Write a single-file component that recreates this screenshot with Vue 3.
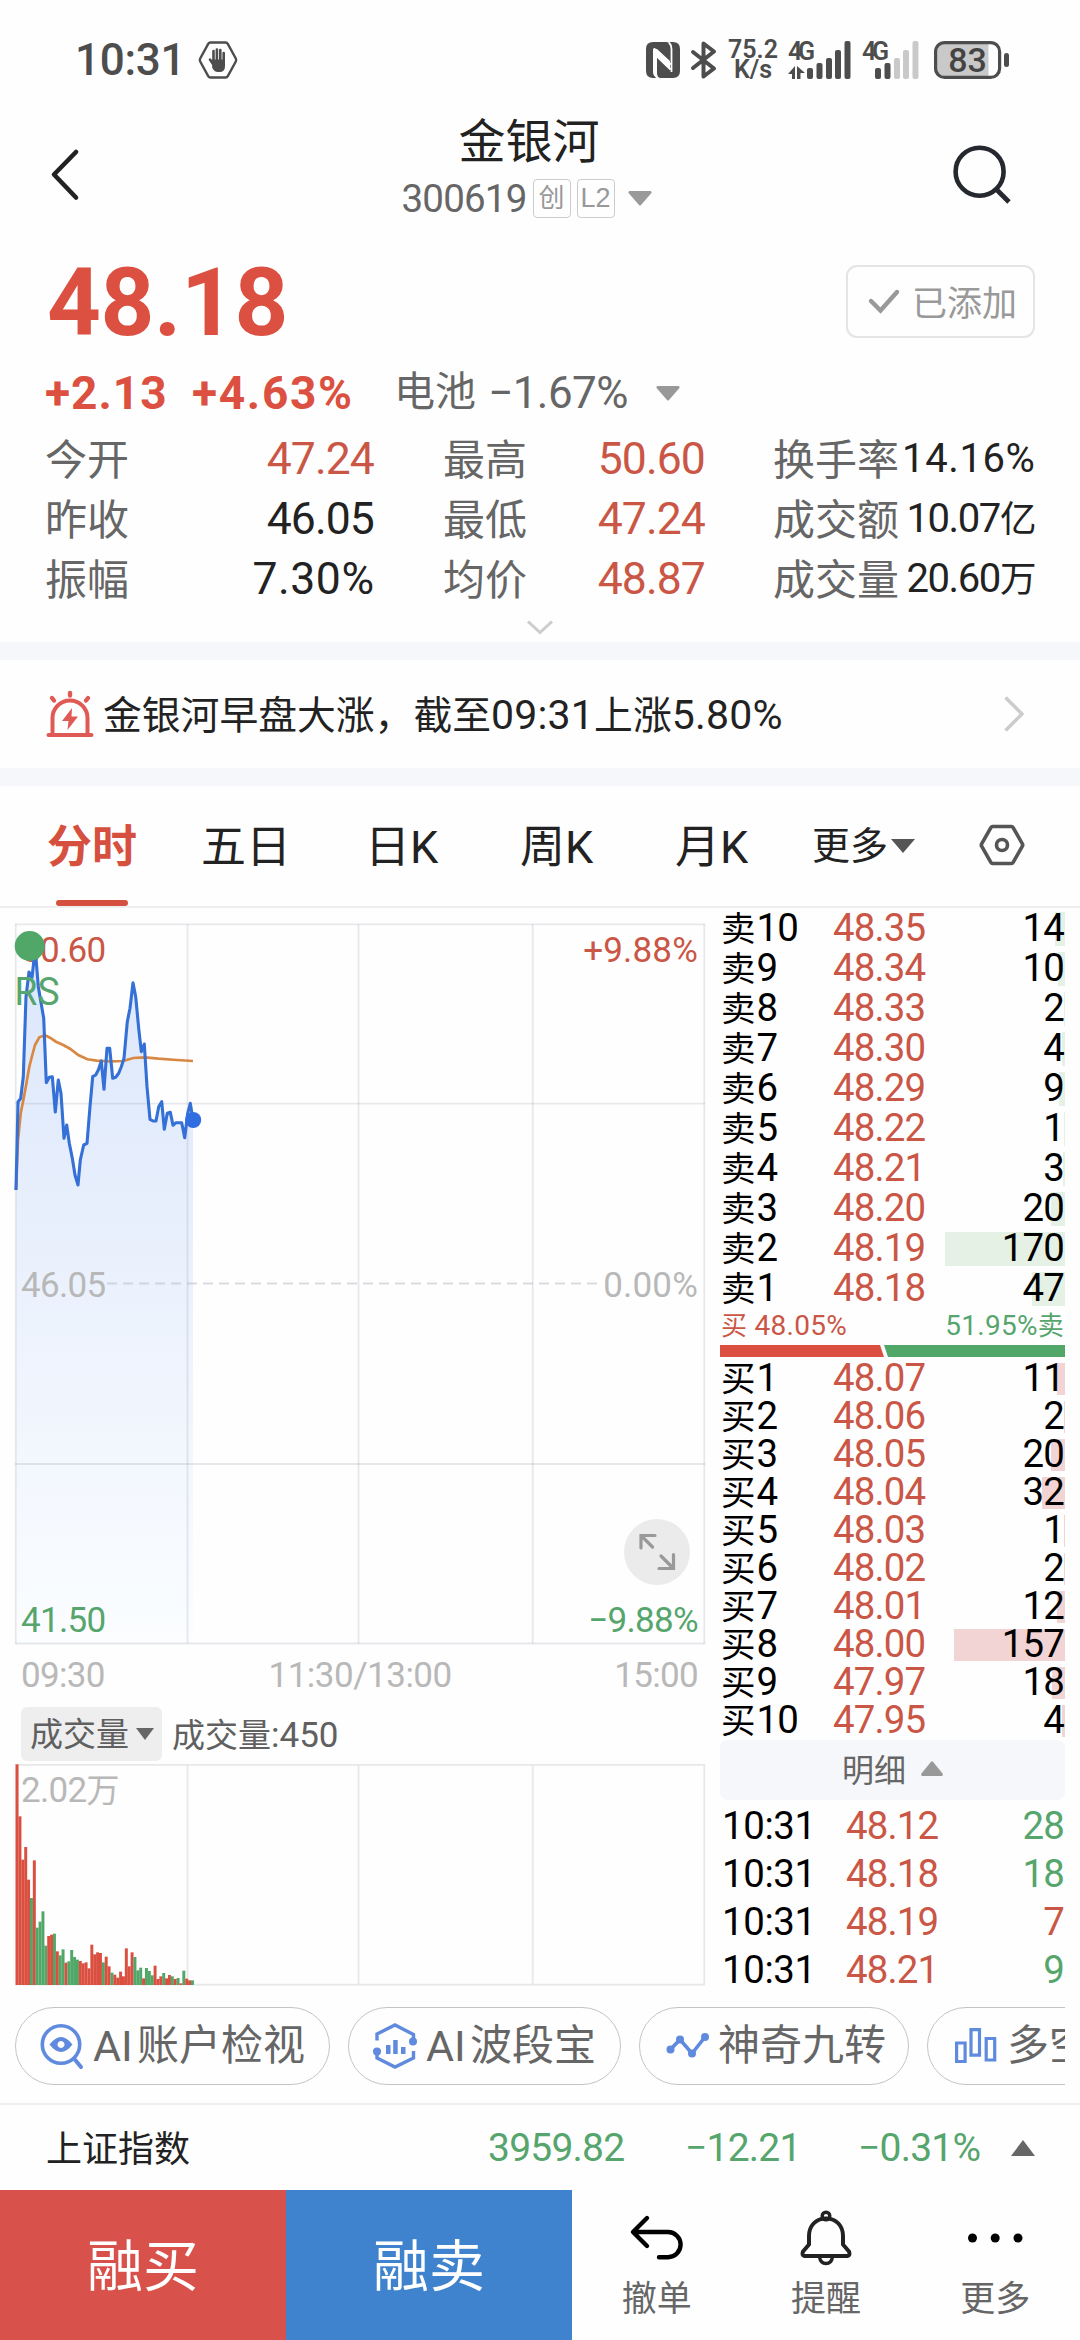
<script setup>
const stats = [
  [['今开', '47.24', 'up'], ['最高', '50.60', 'up'], ['换手率', '14.16%', 'wide']],
  [['昨收', '46.05', ''], ['最低', '47.24', 'up'], ['成交额', '10.07', '', '亿']],
  [['振幅', '7.30%', 'wide'], ['均价', '48.87', 'up'], ['成交量', '20.60', '', '万']],
]

const sells = [
  ['卖10', '48.35', 14], ['卖9', '48.34', 10], ['卖8', '48.33', 2], ['卖7', '48.30', 4], ['卖6', '48.29', 9],
  ['卖5', '48.22', 1], ['卖4', '48.21', 3], ['卖3', '48.20', 20], ['卖2', '48.19', 170], ['卖1', '48.18', 47],
]
const buys = [
  ['买1', '48.07', 11], ['买2', '48.06', 2], ['买3', '48.05', 20], ['买4', '48.04', 32], ['买5', '48.03', 1],
  ['买6', '48.02', 2], ['买7', '48.01', 12], ['买8', '48.00', 157], ['买9', '47.97', 18], ['买10', '47.95', 4],
]
const depth = (n) => ({ width: (n * 120) / 170 + 'px' })

const trades = [
  ['10:31', '48.12', '28', 'down'],
  ['10:31', '48.18', '18', 'down'],
  ['10:31', '48.19', '7', 'up'],
  ['10:31', '48.21', '9', 'down'],
]

// Intraday price and average lines, in thirds of a pixel from the plot origin
const price = [
  [48, 1230], [54, 966], [62, 955], [70, 890], [78, 650], [87, 576], [96, 592], [104, 520], [108, 535], [115, 620],
  [131, 715], [139, 908], [148, 892], [157, 890], [166, 996], [175, 900], [183, 940], [192, 1075], [200, 1035],
  [208, 1090], [217, 1135], [225, 1185], [234, 1215], [241, 1140], [251, 1095], [261, 1090], [270, 980], [278, 890],
  [287, 885], [295, 870], [304, 843], [312, 928], [321, 805], [329, 805], [338, 895], [347, 892], [356, 880],
  [364, 860], [372, 835], [382, 725], [390, 685], [399, 608], [407, 650], [416, 745], [424, 815], [433, 792],
  [441, 920], [450, 1018], [459, 1023], [468, 1023], [476, 980], [485, 965], [493, 1048], [502, 1000], [511, 997],
  [519, 1036], [528, 1028], [545, 1028], [554, 1073], [563, 1000], [571, 970], [579, 1020],
]
const average = [
  [48, 1230], [54, 1080], [62, 1000], [72, 950], [80, 905], [88, 860], [97, 825], [105, 795], [118, 772], [135, 766],
  [150, 773], [168, 785], [190, 795], [210, 806], [235, 825], [262, 838], [290, 842], [330, 844], [370, 843],
  [400, 834], [435, 832], [475, 836], [530, 840], [579, 843],
]
const toPoints = (list) => list.map(([x, y]) => `${(x / 3).toFixed(1)},${(y / 3 - 128).toFixed(1)}`).join(' ')
const pricePoints = toPoints(price)
const averagePoints = toPoints(average)
const areaPoints = `${pricePoints} 193,735 16,735`

const volumes = [
  662, 506, 376, 414, 316, 261, 374, 172, 190, 221, 118, 147, 151, 154, 101, 89, 107, 67, 71, 105, 84, 76, 72, 65, 68, 50,
  121, 92, 98, 96, 68, 85, 56, 37, 31, 22, 40, 26, 110, 56, 98, 84, 44, 52, 20, 51, 42, 29, 58, 18, 26, 36, 20, 30, 26,
  18, 21, 5, 43, 19, 14, 14,
]
const sides = 'rrrrrgrggggrrgrggrggggrrrrrrrrgrrgrrrrrrrgggrgggrrrgrrgrgrgrrg'
const bars = volumes.map((v, i) => ({ x: 15.6 + i * 2.875, h: v / 3, fill: sides[i] === 'r' ? '#da4f3f' : '#50a767' }))

const gridX = [15.7, 187.5, 358.5, 532.7, 704.3]
</script>

<template>
  <div class="app">
    <header class="status">
      <span class="clock">10:31</span>
      <svg class="hex" width="40" height="38" viewBox="0 0 40 38">
        <path d="M12.5 1.5h15q1.5 0 2.3 1.4l8 14.6q.8 1.5 0 3l-8 14.6q-.8 1.4-2.3 1.4h-15q-1.5 0-2.3-1.4l-8-14.6q-.8-1.5 0-3l8-14.6q.8-1.4 2.3-1.4z" fill="none" stroke="#4d4d4d" stroke-width="2.4" />
        <path d="M15.5 20V10M18.900 19V8.500M22.300 19V9M25.700 21V12M12 18.500l4 6" stroke="#4d4d4d" stroke-width="2.600" stroke-linecap="round" />
        <path d="M14.200 18.500h12.800v6.500q0 6-5.500 6h-1.500q-4 0-5.800-4.500z" fill="#4d4d4d" />
      </svg>
      <div class="sys">
        <svg width="34" height="36" viewBox="0 0 34 36">
          <path d="M7 0h13q4 0 4 5v14L11 7 7 7v23q0 4 4 6H7q-7 0-7-7V7q0-7 7-7zM27 36H15q-4 0-4-5V15l13 12V7q0-5-1-7h4q7 0 7 7v22q0 7-7 7z" fill="#4d4d4d" />
          <path d="M8.500 6v23q0 4 2.500 6.500M25.500 30V7q0-4-2.500-6.500M9 7.500l15.500 15M10.500 14l14 13.500" stroke="#fefefe" stroke-width="1.800" fill="none" />
        </svg>
        <svg class="bt" width="26" height="38" viewBox="0 0 26 38">
          <path d="M2 11L23 27.500 12.500 35.500V2.500L23 10.500 2 27" fill="none" stroke="#4d4d4d" stroke-width="4" stroke-linejoin="round" stroke-linecap="round" />
        </svg>
        <div class="rate"><span>75.2</span><span>K/s</span></div>
        <svg class="sig" width="64" height="38" viewBox="0 0 64 38" fill="#4d4d4d">
          <text x="0" y="18.500" class="g4" textLength="27">4G</text>
          <path d="M7 25v13H4v-5H0zM9 25l8 7h-4.500v6H9z" />
          <rect x="19" y="27" width="6" height="11" rx="2" /><rect x="28.500" y="22" width="6" height="16" rx="2" />
          <rect x="38" y="17" width="6" height="21" rx="2" /><rect x="47" y="9" width="6" height="29" rx="2" />
          <rect x="56.500" y="0" width="6" height="38" rx="2" />
        </svg>
        <svg class="sig2" width="58" height="38" viewBox="0 0 58 38" fill="#4d4d4d">
          <text x="0" y="18.500" class="g4" textLength="27">4G</text>
          <rect x="13" y="27" width="6" height="11" rx="2" /><rect x="22.500" y="22" width="6" height="16" rx="2" />
          <g fill="#c9c9c9"><rect x="32" y="17" width="6" height="21" rx="2" /><rect x="41" y="9" width="6" height="29" rx="2" /><rect x="50.500" y="0" width="6" height="38" rx="2" /></g>
        </svg>
        <svg class="bat" width="76" height="38" viewBox="0 0 76 38">
          <path d="M10 3h44.500v32H10q-7 0-7-7V10q0-7 7-7z" fill="#c9c9c9" />
          <rect x="1.600" y="1.600" width="64" height="34.800" rx="9" fill="none" stroke="#4d4d4d" stroke-width="3.200" />
          <rect x="70" y="12" width="5" height="14" rx="2.500" fill="#4d4d4d" />
          <text x="33.500" y="31" text-anchor="middle" class="bn">83</text>
        </svg>
      </div>
    </header>

    <nav class="top">
      <svg class="back" width="30" height="52" viewBox="0 0 30 52"><path d="M26 3L4 25.500 26 48.500" fill="none" stroke="#222" stroke-width="4.600" stroke-linecap="round" stroke-linejoin="round" /></svg>
      <div class="title">
        <h1>金银河</h1>
        <div class="code"><span class="num">300619</span><b>创</b><b class="l2">L2</b><svg width="24" height="15" viewBox="0 0 24 15"><path d="M1.500 0h21q2 1 .5 2.500L13 14q-1 1-2 0L1 2.500Q-.5 1 1.500 0z" fill="#999" /></svg></div>
      </div>
      <svg class="search" width="62" height="62" viewBox="0 0 62 62"><circle cx="28.600" cy="28.700" r="24" fill="none" stroke="#25282e" stroke-width="4.600" /><path d="M45.500 46.500L58 59" stroke="#25282e" stroke-width="4.800" /></svg>
    </nav>

    <section class="quote">
      <div class="priceline">
        <strong class="num">48.18</strong>
        <button><svg width="32" height="26" viewBox="0 0 32 26"><path d="M3 13l9.500 9.500L29 4" fill="none" stroke="#999" stroke-width="4.400" stroke-linecap="round" /></svg>已添加</button>
      </div>
      <div class="change">
        <b class="num c1">+2.13</b><b class="num c2">+4.63%</b><span class="ind">电池</span><span class="num pct">−1.67%</span>
        <svg width="24" height="15" viewBox="0 0 24 15"><path d="M1.500 0h21q2 1 .5 2.500L13 14q-1 1-2 0L1 2.500Q-.5 1 1.500 0z" fill="#999" /></svg>
      </div>
      <div class="stats">
        <div v-for="(row, i) in stats" :key="i" class="srow">
          <div v-for="(c, j) in row" :key="j" :class="['cell', 'cell' + j]">
            <span class="lab">{{ c[0] }}</span><span :class="['num', 'val', c[2]]">{{ c[1] }}<i v-if="c[3]">{{ c[3] }}</i></span>
          </div>
        </div>
      </div>
      <svg class="more" width="28" height="16" viewBox="0 0 28 16"><path d="M2 1.500l12 11 12-11" fill="none" stroke="#ccc" stroke-width="3" /></svg>
    </section>

    <section class="news">
      <svg width="48" height="46" viewBox="0 0 48 46">
        <g fill="none" stroke="#e05a55" stroke-width="4" stroke-linecap="round"><path d="M6.500 42V27a17.500 17.500 0 0 1 35 0v15M2.500 44h43" /><path d="M24 2v2.500M6 7l2 2.500M42 7l-2 2.500" stroke-width="4.400" /></g>
        <path d="M26 17l-10 13h6.500l-1 9L32 25.500h-6.500z" fill="#e05a55" />
      </svg>
      <p>金银河早盘大涨，截至<span class="num">09:31</span>上涨<span class="num">5.80%</span></p>
      <svg class="go" width="22" height="38" viewBox="0 0 22 38"><path d="M2.500 2.500L19 19 2.500 35.500" fill="none" stroke="#ccc" stroke-width="3.400" /></svg>
    </section>

    <nav class="tabs">
      <span class="on">分时</span><span class="five">五日</span><span class="k">日K</span><span class="k">周K</span><span class="k">月K</span>
      <span class="mt">更多<svg width="24" height="14" viewBox="0 0 24 14"><path d="M0 0h24L12 14z" fill="#555" /></svg></span>
      <svg class="gear" width="46" height="42" viewBox="0 0 46 42"><path d="M13.500 2.500h19q1 0 1.500 1l9.500 16.500q.5 1 0 2L34 38.500q-.5 1-1.500 1h-19q-1 0-1.500-1L2.500 22q-.5-1 0-2L12 3.500q.5-1 1.500-1z" fill="none" stroke="#555" stroke-width="3.600" /><circle cx="23" cy="21" r="5.500" fill="none" stroke="#555" stroke-width="3.600" /></svg>
    </nav>

    <main class="main">
      <div class="left">
        <svg class="plot" width="710" height="792" viewBox="0 0 710 792">
          <defs><linearGradient id="area" x1="0" y1="0" x2="0" y2="1"><stop offset="0" stop-color="#dce7fb" /><stop offset="1" stop-color="#fbfdff" /></linearGradient></defs>
          <polygon :points="areaPoints" fill="url(#area)" />
          <g stroke="#8a90a0" stroke-opacity=".2" stroke-width="1.800">
            <path v-for="x in gridX" :key="x" :d="`M${x} 16.300V735.500`" />
            <path d="M15 16.300H705M15 195.700H705M15 556H705M15 735.500H705" />
            <path d="M107 375.500H603" stroke-dasharray="10 6" stroke-opacity=".3" />
          </g>
          <text x="21" y="54" class="t up">50.60</text>
          <polyline :points="averagePoints" fill="none" stroke="#d98843" stroke-width="2.700" />
          <polyline :points="pricePoints" fill="none" stroke="#3570d6" stroke-width="3.100" stroke-linejoin="round" />
          <circle cx="193.200" cy="212" r="8" fill="#2f6de0" />
          <circle cx="29.700" cy="38" r="15" fill="#50a767" />
          <text x="14.500" y="97" class="rs" textLength="45" lengthAdjust="spacingAndGlyphs">RS</text>
          <text x="698" y="54" class="t w up" text-anchor="end">+9.88%</text>
          <text x="21" y="388.500" class="t dim">46.05</text>
          <text x="698" y="388.500" class="t w dim" text-anchor="end">0.00%</text>
          <text x="21" y="724" class="t down">41.50</text>
          <text x="698" y="724" class="t down" text-anchor="end">−9.88%</text>
          <text x="21" y="779" class="t dim">09:30</text>
          <text x="360" y="779" class="t dim" text-anchor="middle" textLength="183">11:30/13:00</text>
          <text x="698" y="779" class="t dim" text-anchor="end">15:00</text>
          <circle cx="657" cy="644" r="33" fill="#ebebeb" />
          <path d="M655 627.500H641V640M641 627.500L652.500 639M659 660.500H673.500V646.500M661 648L673 660" fill="none" stroke="#999" stroke-width="3.200" stroke-linecap="round" />
        </svg>
        <div class="volbar">
          <span class="pick">成交量<svg width="18" height="12" viewBox="0 0 18 12"><path d="M0 0h18L9 12z" fill="#666" /></svg></span>
          <span class="now">成交量<span class="num">:450</span></span>
        </div>
        <svg class="plot" width="710" height="222" viewBox="0 0 710 222">
          <g stroke="#e8e8e8" stroke-width="1.800">
            <path v-for="x in gridX" :key="x" :d="`M${x} 0V220`" />
            <path d="M15 .9H705M15 220.700H705" />
          </g>
          <rect v-for="(b, i) in bars" :key="i" :x="b.x" :y="221 - b.h" width="2.950" :height="b.h" :fill="b.fill" />
          <text x="21" y="38" class="t dim">2.02<tspan font-size="33">万</tspan></text>
        </svg>
      </div>

      <aside class="book">
        <div class="sells">
          <div v-for="r in sells" :key="r[0]" class="lv">
            <span class="n"><i>{{ r[0][0] }}</i>{{ r[0].slice(1) }}</span><span class="p up">{{ r[1] }}</span>
            <span class="q"><em :style="depth(r[2])"></em>{{ r[2] }}</span>
          </div>
        </div>
        <div class="ratio"><span class="up"><i>买</i> 48.05%</span><span class="down">51.95%<i>卖</i></span></div>
        <svg class="split" width="345" height="12" viewBox="0 0 345 12"><path d="M0 0h160l4 12H0z" fill="#da4f3f" /><path d="M164 0h181v12H168z" fill="#50a767" /></svg>
        <div class="buys">
          <div v-for="r in buys" :key="r[0]" class="lv">
            <span class="n"><i>{{ r[0][0] }}</i>{{ r[0].slice(1) }}</span><span class="p up">{{ r[1] }}</span>
            <span class="q"><em :style="depth(r[2])"></em>{{ r[2] }}</span>
          </div>
        </div>
        <div class="detail">明细<svg width="22" height="15" viewBox="0 0 22 15"><path d="M10 .8q1-1 2 0l9.500 11.700Q22.500 15 20.500 15h-19Q-.5 15 .5 12.500z" fill="#999" /></svg></div>
        <div v-for="(t, i) in trades" :key="i" class="tr"><span class="time">{{ t[0] }}</span><span class="tp up">{{ t[1] }}</span><span :class="['tq', t[3]]">{{ t[2] }}</span></div>
      </aside>
    </main>

    <section class="chips">
      <div class="chip">
        <svg width="44" height="46" viewBox="0 0 44 46"><circle cx="21" cy="21.500" r="18.700" fill="none" stroke="#5f8add" stroke-width="3.600" /><path d="M34 35.500L41 44" stroke="#5f8add" stroke-width="4" stroke-linecap="round" /><path fill-rule="evenodd" d="M9.500 21.500q11.500-15 23 0-11.500 15-23 0zM21 18a3.500 3.500 0 1 0 .01 0z" fill="#5f8add" /></svg>
        <span class="ai">AI</span><span>账户检视</span>
      </div>
      <div class="chip">
        <svg width="44" height="46" viewBox="0 0 44 46" fill="none" stroke="#5f8add" stroke-width="3.400"><path d="M4 17.500V11L22 2l18.500 9.500V16M40.500 28v7L22 44 4 35v-5" /><g fill="#5f8add" stroke="none"><circle cx="40" cy="18.500" r="4" /><circle cx="4" cy="28.500" r="4" /><path d="M13 22h4.500v9H13zM20.200 17h4.500v14h-4.500zM28 24h4.500v7H28z" /></g></svg>
        <span class="ai">AI</span><span>波段宝</span>
      </div>
      <div class="chip">
        <svg width="44" height="26" viewBox="0 0 44 26"><path d="M4.500 16.500L14 6.500 26 20.500 39 4" fill="none" stroke="#5f8add" stroke-width="3.600" /><g fill="#5f8add"><circle cx="4.500" cy="16.500" r="4" /><circle cx="14" cy="6.500" r="4" /><circle cx="26" cy="20.500" r="4" /><circle cx="39" cy="4" r="4" /></g></svg>
        <span class="zh">神奇九转</span>
      </div>
      <div class="chip">
        <svg width="44" height="36" viewBox="0 0 44 36" fill="none" stroke="#5f8add" stroke-width="3.200"><path d="M2.600 15h8.500v18.500H2.600zM17 1.600h8.500v25.500H17zM32.200 10.500h8.500V32h-8.500z" /></svg>
        <span class="zh2">多空</span>
      </div>
    </section>

    <section class="index">
      <span class="iname">上证指数</span><span class="num i1">3959.82</span><span class="num i2">−12.21</span><span class="num i3">−0.31%</span>
      <svg width="24" height="16" viewBox="0 0 24 16"><path d="M12 0l12 16H0z" fill="#666" /></svg>
    </section>

    <footer class="foot">
      <div class="act buy">融买</div>
      <div class="act sell">融卖</div>
      <div class="tool">
        <svg width="56" height="60" viewBox="0 0 56 60"><path d="M18 11L4 25l14 14M4.500 25H39a12.600 12.600 0 0 1 0 25.200H30" fill="none" stroke="#000" stroke-width="4.400" stroke-linecap="round" stroke-linejoin="round" /></svg>
        撤单
      </div>
      <div class="tool">
        <svg width="56" height="60" viewBox="0 0 56 60" fill="none" stroke="#222" stroke-width="4"><path d="M28 11.500c10.500 0 17 7.500 17 17.500v8.500l6 7q1.500 4-1.500 4.500h-43q-3-.5-1.500-4.500l6-7V29c0-10 6.500-17.500 17-17.500z" stroke-linejoin="round" /><circle cx="28" cy="9" r="3.800" stroke-width="3.400" /><path d="M21.500 50q1 6.500 6.500 6.500t6.500-6.500" stroke-width="3.400" /></svg>
        提醒
      </div>
      <div class="tool">
        <svg width="56" height="60" viewBox="0 0 56 60"><circle cx="5.500" cy="31" r="4.500" /><circle cx="28.200" cy="31" r="4.500" /><circle cx="51" cy="31" r="4.500" /></svg>
        更多
      </div>
    </footer>
  </div>
</template>

<style>
body { margin: 0; background: #fff; }
</style>

<style scoped>
* { box-sizing: border-box; }
.app { width: 1080px; height: 2340px; overflow: hidden; background: #fefefe; color: #222; font-family: Roboto, "Noto Sans CJK SC", sans-serif; display: flex; flex-direction: column; }
svg { display: block; flex: none; overflow: visible; }
i, em { font-style: normal; }
.num { letter-spacing: -.02em; }
.up { color: #ca5646; }
.down { color: #56a56d; }
.dim { color: #b8b8b8; }

.status { height: 102px; padding: 18px 70px 0 75px; display: flex; align-items: center; color: #4d4d4d; }
.clock { width: 123px; font-size: 44px; font-weight: 500; letter-spacing: -.3px; line-height: 84px; }
.sys { display: flex; align-items: center; margin-left: auto; }
.bt { margin-left: 11px; }
.rate { margin-left: 11px; width: 50px; display: flex; flex-direction: column; align-items: center; font-size: 25px; font-weight: 600; line-height: 20px; }
.sig { margin-left: 10px; }
.sig2 { margin-left: 10px; }
.bat { margin-left: 14px; }
.g4 { font-size: 25px; font-weight: 600; }
.bn { font-size: 34px; font-weight: 500; fill: #444; }

.top { height: 138px; display: flex; align-items: flex-start; padding: 0 67px 0 50px; justify-content: space-between; }
.back { margin-top: 47px; }
.search { margin-top: 41px; }
.title { display: flex; flex-direction: column; align-items: center; margin-left: 22px; }
h1 { margin: 12px 0 0 5px; font-size: 47px; font-weight: 400; line-height: 56px; }
.code { display: flex; align-items: center; height: 40px; margin-top: 8px; font-size: 38.500px; color: #666; }
.code b { width: 38px; height: 39px; margin-left: 6px; border: 1.500px solid #ccc; border-radius: 4px; font-size: 26px; font-weight: 400; line-height: 37px; text-align: center; color: #999; }
.code .l2 { font-size: 27px; font-family: "Liberation Sans", sans-serif; }
.code svg { margin-left: 13px; }

.quote { height: 402px; display: flex; flex-direction: column; align-items: stretch; }
.priceline { height: 120px; display: flex; justify-content: space-between; padding: 25px 45px 0 47px; }
.priceline strong { font-size: 94px; font-weight: 700; line-height: 76px; color: #db5040; letter-spacing: -.4px; }
button { width: 189px; height: 73px; padding: 0 0 2px 20px; display: flex; align-items: center; gap: 12px; border: 2px solid #e4e4e4; border-radius: 11px; background: #fefefe; color: #999; font: 35px/68px "Noto Sans CJK SC", sans-serif; }
.change { height: 66px; display: flex; align-items: center; padding-left: 45px; font-size: 44px; line-height: 60px; color: #666; }
.change b { font-size: 46px; color: #db5040; }
.change .c1 { width: 147px; letter-spacing: 1px; }
.change .c2 { width: 202px; letter-spacing: 1.700px; }
.ind { width: 94px; font-size: 41px; margin-top: -3px; }
.change .pct { width: 168px; letter-spacing: -.012em; }
.stats { height: 180px; margin-top: 3px; }
.srow { height: 60px; display: flex; align-items: center; }
.cell { display: flex; justify-content: space-between; align-items: center; line-height: 60px; }
.cell0 { width: 329px; margin-left: 45px; }
.cell1 { width: 262px; margin-left: 69px; }
.cell2 { width: 262px; margin-left: 68px; }
.lab { font-size: 42px; color: #666; padding-top: 3px; line-height: 57px; }
.val { font-size: 44.500px; }
.val.wide { letter-spacing: .012em; margin-right: -.012em; }
.cell2 .val { font-size: 40px; letter-spacing: -.035em; }
.cell2 .val.wide { letter-spacing: .015em; }
.val i { font-size: 36.500px; }
.more { margin: 11px auto 0; }

.news { height: 144px; border: solid #f6f7fa; border-width: 18px 0; display: flex; align-items: center; padding: 0 55px 0 46px; }
.news p { margin: -5px auto 0 9px; font-size: 38.800px; }
.news .num { font-size: 41px; letter-spacing: .005em; }

.tabs { height: 122px; border-bottom: 2px solid #eee; display: flex; align-items: stretch; padding-left: 47px; font-size: 45px; line-height: 123px; }
.tabs span { width: 154px; }
.tabs .on { position: relative; font-weight: 700; color: #d6503f; }
.tabs .on::after { content: ""; position: absolute; left: 9px; bottom: 0; width: 72px; height: 6px; border-radius: 3px; background: #d6503f; }
.tabs .five { width: 164px; }
.tabs .k { width: 155px; }
.tabs .mt { display: flex; align-items: center; gap: 3px; width: 167px; margin-left: -18px; font-size: 38px; }
.gear { margin-top: 38px; }

.main { height: 1088px; display: flex; }
.left { width: 710px; }
.t { font-size: 35px; letter-spacing: -.02em; fill: currentColor; }
.t.w { letter-spacing: .005em; }
.rs { font-size: 38px; fill: #56a56d; }
.volbar { height: 64px; padding: 7px 0 3px 21px; display: flex; align-items: center; color: #606060; font-size: 33px; }
.pick { width: 141px; height: 54px; padding-left: 9px; display: flex; align-items: center; gap: 7px; background: #eee; border-radius: 6px; line-height: 53px; }
.now { margin: -2px 0 0 10px; }
.now .num { font-size: 35px; letter-spacing: 0; }

.book { width: 345px; margin-left: 10px; font-size: 38.400px; letter-spacing: -.0225em; color: #000; }
.lv { height: 40px; display: flex; align-items: flex-start; line-height: 40px; }
.buys .lv { height: 38px; line-height: 38px; }
.lv i { font-size: 34.500px; margin-right: 1px; letter-spacing: 0; line-height: 1; }
.n { width: 113px; padding-left: 1px; }
.p { width: 93px; }
.q { position: relative; flex: 1; padding-right: 1px; text-align: right; z-index: 0; }
.q em { position: absolute; z-index: -1; right: 0; top: 4px; height: 34px; background: #e6f1e5; }
.buys .q em { top: 4px; height: 32px; background: #f2d4d4; }
.ratio { height: 37px; display: flex; justify-content: space-between; padding: 0 1px 0 1px; font-size: 28px; line-height: 36px; letter-spacing: .01em; }
.ratio i { font-size: 26px; line-height: 1; }
.buys { margin-top: 2px; height: 381px; }
.detail { height: 60px; margin-bottom: 2px; padding: 0 0 4px 122px; display: flex; align-items: center; gap: 15px; border-radius: 8px; background: #f6f7fa; color: #666; font-size: 32px; letter-spacing: 0; }
.tr { height: 48px; display: flex; line-height: 48px; padding: 0 1px 0 2px; }
.time { width: 124px; letter-spacing: -.01em; }
.tp { width: 95px; }
.tq { flex: 1; text-align: right; }

.chips { height: 107px; margin: 0 15px; padding-top: 11px; display: flex; gap: 18px; overflow: hidden; }
.chip { flex: none; height: 78px; width: 315px; border: 1.500px solid #c4c4c4; border-radius: 39px; display: flex; align-items: center; padding-left: 24px; font-size: 42px; line-height: 78px; color: #666; white-space: nowrap; }
.chip:nth-child(2) { width: 273px; }
.chip:nth-child(3), .chip:nth-child(4) { width: 270px; padding-left: 26px; }
.ai { width: 44px; margin-left: 9px; font-size: 43px; }
.zh { margin-left: 8px; }
.zh2 { margin-left: 9px; }

.index { height: 87px; border-top: 2px solid #eee; display: flex; align-items: center; padding: 0 45px 0 46px; font-size: 39px; color: #56a56d; }
.iname { width: 442px; margin-top: -3px; font-size: 36px; color: #222; }
.i1 { width: 197px; }
.i2 { width: 173px; }
.index svg { margin-left: auto; }

.foot { height: 150px; display: flex; }
.act { width: 286px; text-align: center; color: #fff; font-size: 56px; line-height: 154px; }
.buy { background: #d9514b; }
.sell { background: #3f82ce; }
.tool { flex: 1; display: flex; flex-direction: column; align-items: center; padding-top: 17px; font-size: 35px; line-height: 66px; color: #666; }
</style>
